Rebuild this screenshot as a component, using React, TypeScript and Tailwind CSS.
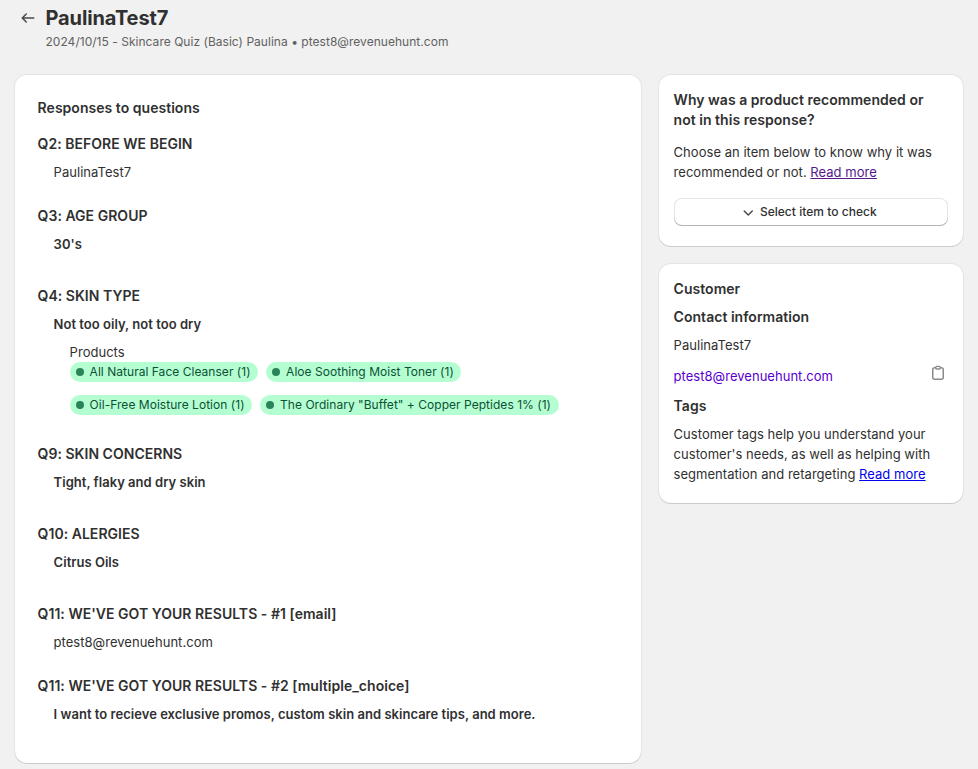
import React from "react";

type Question = { title: string; answer: string; bold?: boolean; last?: boolean };

function Pill({ children }: { children: React.ReactNode }) {
  return (
    <span className="inline-flex h-5 items-center whitespace-nowrap rounded-[10px] bg-[#b4fed2] pl-[6px] pr-[7.5px] text-xs leading-4 tracking-[0.033px] text-[#0c5132]">
      <span className="mr-[6px] h-2 w-2 rounded-full bg-[#29845a]" />
      {children}
    </span>
  );
}

function Block({ title, answer, bold, last, children }: Question & { children?: React.ReactNode }) {
  return (
    <section>
      <h3 className="text-sm leading-5 font-semibold">{title}</h3>
      <p className={bold ? "mt-2 pl-4 font-semibold" : "mt-2 pl-4"}>{answer}</p>
      {children}
      {!last && <div className={bold ? "h-8" : "h-6"} />}
    </section>
  );
}

const card =
  "rounded-xl bg-white shadow-[0_1px_0_0_rgba(26,26,26,0.12),0_0_0_1px_rgba(26,26,26,0.06)]";

export default function App() {
  return (
    <div className="h-[769px] w-[978px] overflow-hidden bg-[#f1f1f1] font-['Inter',sans-serif] text-[13px] leading-5 font-normal tracking-[0.03px] text-[#303030]">
      <header className="flex h-[75px] pl-[18px] pt-2">
        <svg viewBox="0 0 20 20" className="h-5 w-5 fill-[#4a4a4a]">
          <path fillRule="evenodd" d="M16.5 10a.75.75 0 0 1-.75.75h-9.69l2.72 2.72a.75.75 0 0 1-1.06 1.06l-4-4a.75.75 0 0 1 0-1.06l4-4a.75.75 0 1 1 1.06 1.06l-2.72 2.72h9.69a.75.75 0 0 1 .75.75Z" />
        </svg>
        <div className="-mt-[2px] ml-[7.5px]">
          <h1 className="text-xl leading-6 font-bold tracking-[-0.12px]">PaulinaTest7</h1>
          <p className="mt-[2px] text-xs leading-5 text-[#616161]">2024/10/15 - Skincare Quiz (Basic) Paulina • ptest8@revenuehunt.com</p>
        </div>
      </header>
      <main className="flex items-start gap-[18px] pl-[15px]">
        <div className={`${card} h-[688px] w-[626px] pl-[22.6px] pt-[23px]`}>
          <h2 className="mb-4 text-sm leading-5 font-semibold">Responses to questions</h2>
          <Block title="Q2: BEFORE WE BEGIN" answer="PaulinaTest7" />
          <Block title="Q3: AGE GROUP" answer="30's" bold />
          <Block title="Q4: SKIN TYPE" answer="Not too oily, not too dry" bold>
            <div className="mt-2 pl-8">
              <p>Products</p>
              <div className="flex gap-2">
                <Pill>All Natural Face Cleanser (1)</Pill>
                <Pill>Aloe Soothing Moist Toner (1)</Pill>
              </div>
              <div className="mt-[13px] -mb-[3px] flex gap-2">
                <Pill>Oil-Free Moisture Lotion (1)</Pill>
                <Pill>The Ordinary "Buffet" + Copper Peptides 1% (1)</Pill>
              </div>
            </div>
          </Block>
          <Block title="Q9: SKIN CONCERNS" answer="Tight, flaky and dry skin" bold />
          <Block title="Q10: ALERGIES" answer="Citrus Oils" bold />
          <Block title="Q11: WE'VE GOT YOUR RESULTS - #1 [email]" answer="ptest8@revenuehunt.com" />
          <Block title="Q11: WE'VE GOT YOUR RESULTS - #2 [multiple_choice]" answer="I want to recieve exclusive promos, custom skin and skincare tips, and more." bold last />
        </div>
        <aside className="flex w-[304px] flex-col gap-[18px]">
          <div className={`${card} h-[171px] pl-[14.6px] pr-[15px] pt-[15px]`}>
            <h2 className="text-sm leading-5 font-semibold">Why was a product recommended or<br />not in this response?</h2>
            <p className="mt-3">
              Choose an item below to know why it was<br />recommended or not. <a className="text-[#551a8b] underline">Read more</a>
            </p>
            <button className="mt-4 flex h-7 w-full items-center justify-center rounded-lg bg-white pr-[7px] text-xs font-[550] shadow-[inset_0_-1px_0_0_#b5b5b5,inset_0_0_0_1px_rgba(0,0,0,0.1)]">
              <svg viewBox="0 0 20 20" className="mr-[2px] h-5 w-5 fill-[#4a4a4a]">
                <path fillRule="evenodd" d="M5.72 8.47a.75.75 0 0 1 1.06 0l3.47 3.47 3.47-3.47a.75.75 0 1 1 1.06 1.06l-4 4a.75.75 0 0 1-1.06 0l-4-4a.75.75 0 0 1 0-1.06Z" />
              </svg>
              Select item to check
            </button>
          </div>
          <div className={`${card} h-[239px] pl-[14.6px] pr-[15px] pt-[15px]`}>
            <h2 className="text-sm leading-5 font-semibold">Customer</h2>
            <h3 className="mt-2 text-sm leading-5 font-semibold">Contact information</h3>
            <p className="mt-2">PaulinaTest7</p>
            <div className="mt-2 flex h-[25px] justify-between">
              <a className="pt-[3px] text-[#5700d1]">ptest8@revenuehunt.com</a>
              <svg viewBox="0 0 20 20" className="h-5 w-5 fill-[#8a8a8a]">
                <path fillRule="evenodd" d="M7.1 4A2 2 0 0 1 9 2.75h2A2 2 0 0 1 12.9 4h.35A2.75 2.75 0 0 1 16 6.75v7.5A2.75 2.75 0 0 1 13.25 17h-6.5A2.75 2.75 0 0 1 4 14.25v-7.5A2.75 2.75 0 0 1 6.75 4h.35Zm0 1.5h-.35c-.69 0-1.25.56-1.25 1.25v7.5c0 .69.56 1.25 1.25 1.25h6.5c.69 0 1.25-.56 1.25-1.25v-7.5c0-.69-.56-1.25-1.25-1.25h-.35A2 2 0 0 1 11 6.75H9A2 2 0 0 1 7.1 5.5ZM9 4a.62.62 0 0 0 0 1.25h2A.62.62 0 0 0 11 4Z" />
              </svg>
            </div>
            <h3 className="mt-2 text-sm leading-5 font-semibold">Tags</h3>
            <p className="mt-2">
              Customer tags help you understand your<br />customer's needs, as well as helping with<br />segmentation and retargeting <a className="text-[#0000ee] underline">Read more</a>
            </p>
          </div>
        </aside>
      </main>
    </div>
  );
}
